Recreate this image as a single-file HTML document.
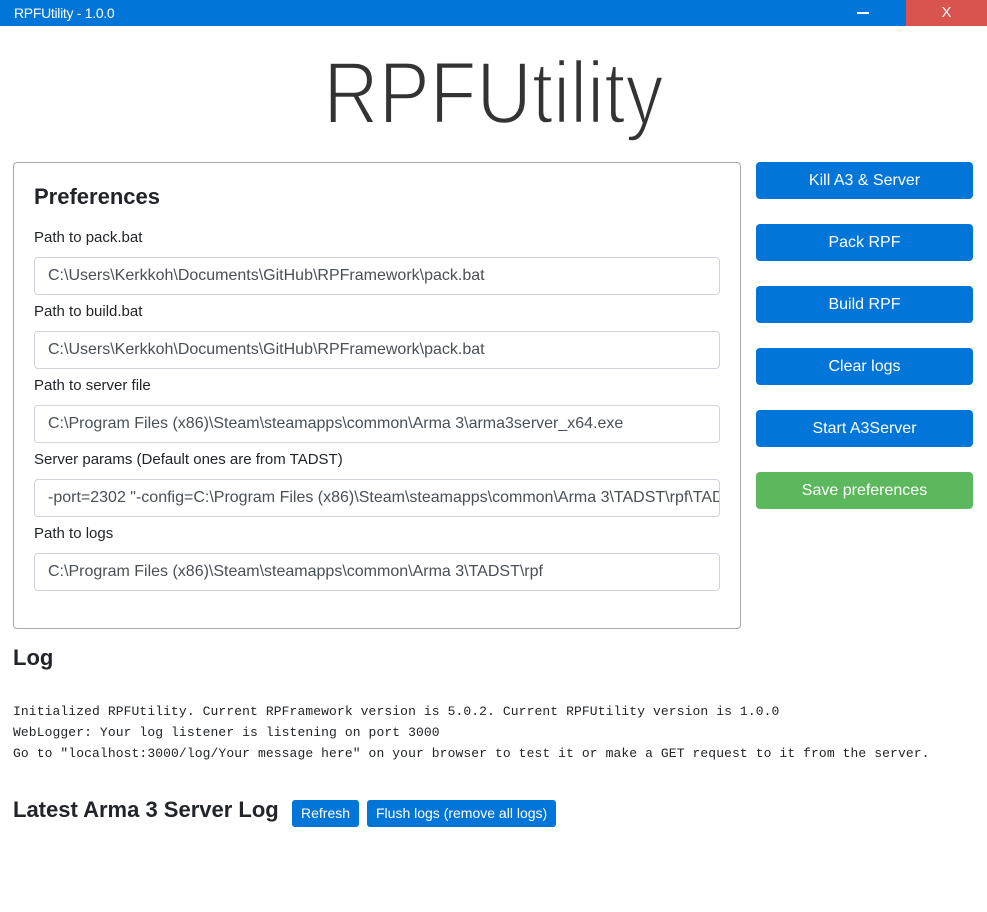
<!DOCTYPE html>
<html><head><meta charset="utf-8"><style>
*{box-sizing:border-box;margin:0;padding:0}
body{width:987px;height:912px;background:#fff;font-family:"Liberation Sans",sans-serif;color:#212529;position:relative;overflow:hidden}
.a{position:absolute}
.tb{left:0;top:0;width:987px;height:26px;background:#0275d8;color:#fff}
.btn{position:absolute;left:756px;width:217px;height:37px;background:#0275d8;color:#fff;border-radius:4px;font-size:16px;text-align:center;line-height:37px}
.lbl{position:absolute;left:34px;font-size:15px;color:#212529}
.in{position:absolute;left:34px;width:686px;height:38px;border:1px solid #ced4da;border-radius:4px;font-size:16px;color:#495057;padding-left:13px;line-height:36px;white-space:nowrap;overflow:hidden}
.mono{font-family:"Liberation Mono",monospace;font-size:13px;letter-spacing:0.1px;color:#212529;line-height:21px}
.sb{display:inline-block;background:#0275d8;color:#fff;font-size:14px;border-radius:3px;height:27px;line-height:27px;padding:0 9px;position:absolute;top:800px}
</style></head><body>
<div class="a tb"><span class="a" style="left:14px;top:5px;font-size:14px;letter-spacing:-0.3px">RPFUtility - 1.0.0</span>
<div class="a" style="left:857px;top:12px;width:12px;height:2px;background:#fff"></div>
<div class="a" style="left:906px;top:0;width:81px;height:26px;background:#d9534f;text-align:center;line-height:26px;font-size:15px">X</div></div>
<div class="a" style="left:0;width:987px;top:42px;text-align:center;font-size:88px;color:#333;"><span style="display:inline-block;transform:scaleX(0.87);letter-spacing:0px;-webkit-text-stroke:2.5px #fff">RPFUtility</span></div>
<div class="a" style="left:13px;top:162px;width:728px;height:467px;border:1px solid #aaa;border-radius:4px"></div>
<div class="a" style="left:34px;top:184px;font-size:22px;font-weight:bold;color:#212529">Preferences</div>
<div class="lbl" style="top:229px">Path to pack.bat</div>
<div class="in" style="top:257px">C:\Users\Kerkkoh\Documents\GitHub\RPFramework\pack.bat</div>
<div class="lbl" style="top:303px">Path to build.bat</div>
<div class="in" style="top:331px">C:\Users\Kerkkoh\Documents\GitHub\RPFramework\pack.bat</div>
<div class="lbl" style="top:377px">Path to server file</div>
<div class="in" style="top:405px">C:\Program Files (x86)\Steam\steamapps\common\Arma 3\arma3server_x64.exe</div>
<div class="lbl" style="top:451px">Server params (Default ones are from TADST)</div>
<div class="in" style="top:479px">-port=2302 "-config=C:\Program Files (x86)\Steam\steamapps\common\Arma 3\TADST\rpf\TADST_config.cfg"</div>
<div class="lbl" style="top:525px">Path to logs</div>
<div class="in" style="top:553px">C:\Program Files (x86)\Steam\steamapps\common\Arma 3\TADST\rpf</div>
<div class="btn" style="top:162px">Kill A3 &amp; Server</div>
<div class="btn" style="top:224px">Pack RPF</div>
<div class="btn" style="top:286px">Build RPF</div>
<div class="btn" style="top:348px">Clear logs</div>
<div class="btn" style="top:410px">Start A3Server</div>
<div class="btn" style="top:472px;background:#5cb85c">Save preferences</div>
<div class="a" style="left:13px;top:645px;font-size:22px;font-weight:bold">Log</div>
<div class="a mono" style="left:13px;top:701px">Initialized RPFUtility. Current RPFramework version is 5.0.2. Current RPFUtility version is 1.0.0<br>WebLogger: Your log listener is listening on port 3000<br>Go to "localhost:3000/log/Your message here" on your browser to test it or make a GET request to it from the server.</div>
<div class="a" style="left:13px;top:797px;font-size:22px;font-weight:bold">Latest Arma 3 Server Log</div>
<div class="sb" style="left:292px">Refresh</div>
<div class="sb" style="left:367px">Flush logs (remove all logs)</div>
</body></html>
